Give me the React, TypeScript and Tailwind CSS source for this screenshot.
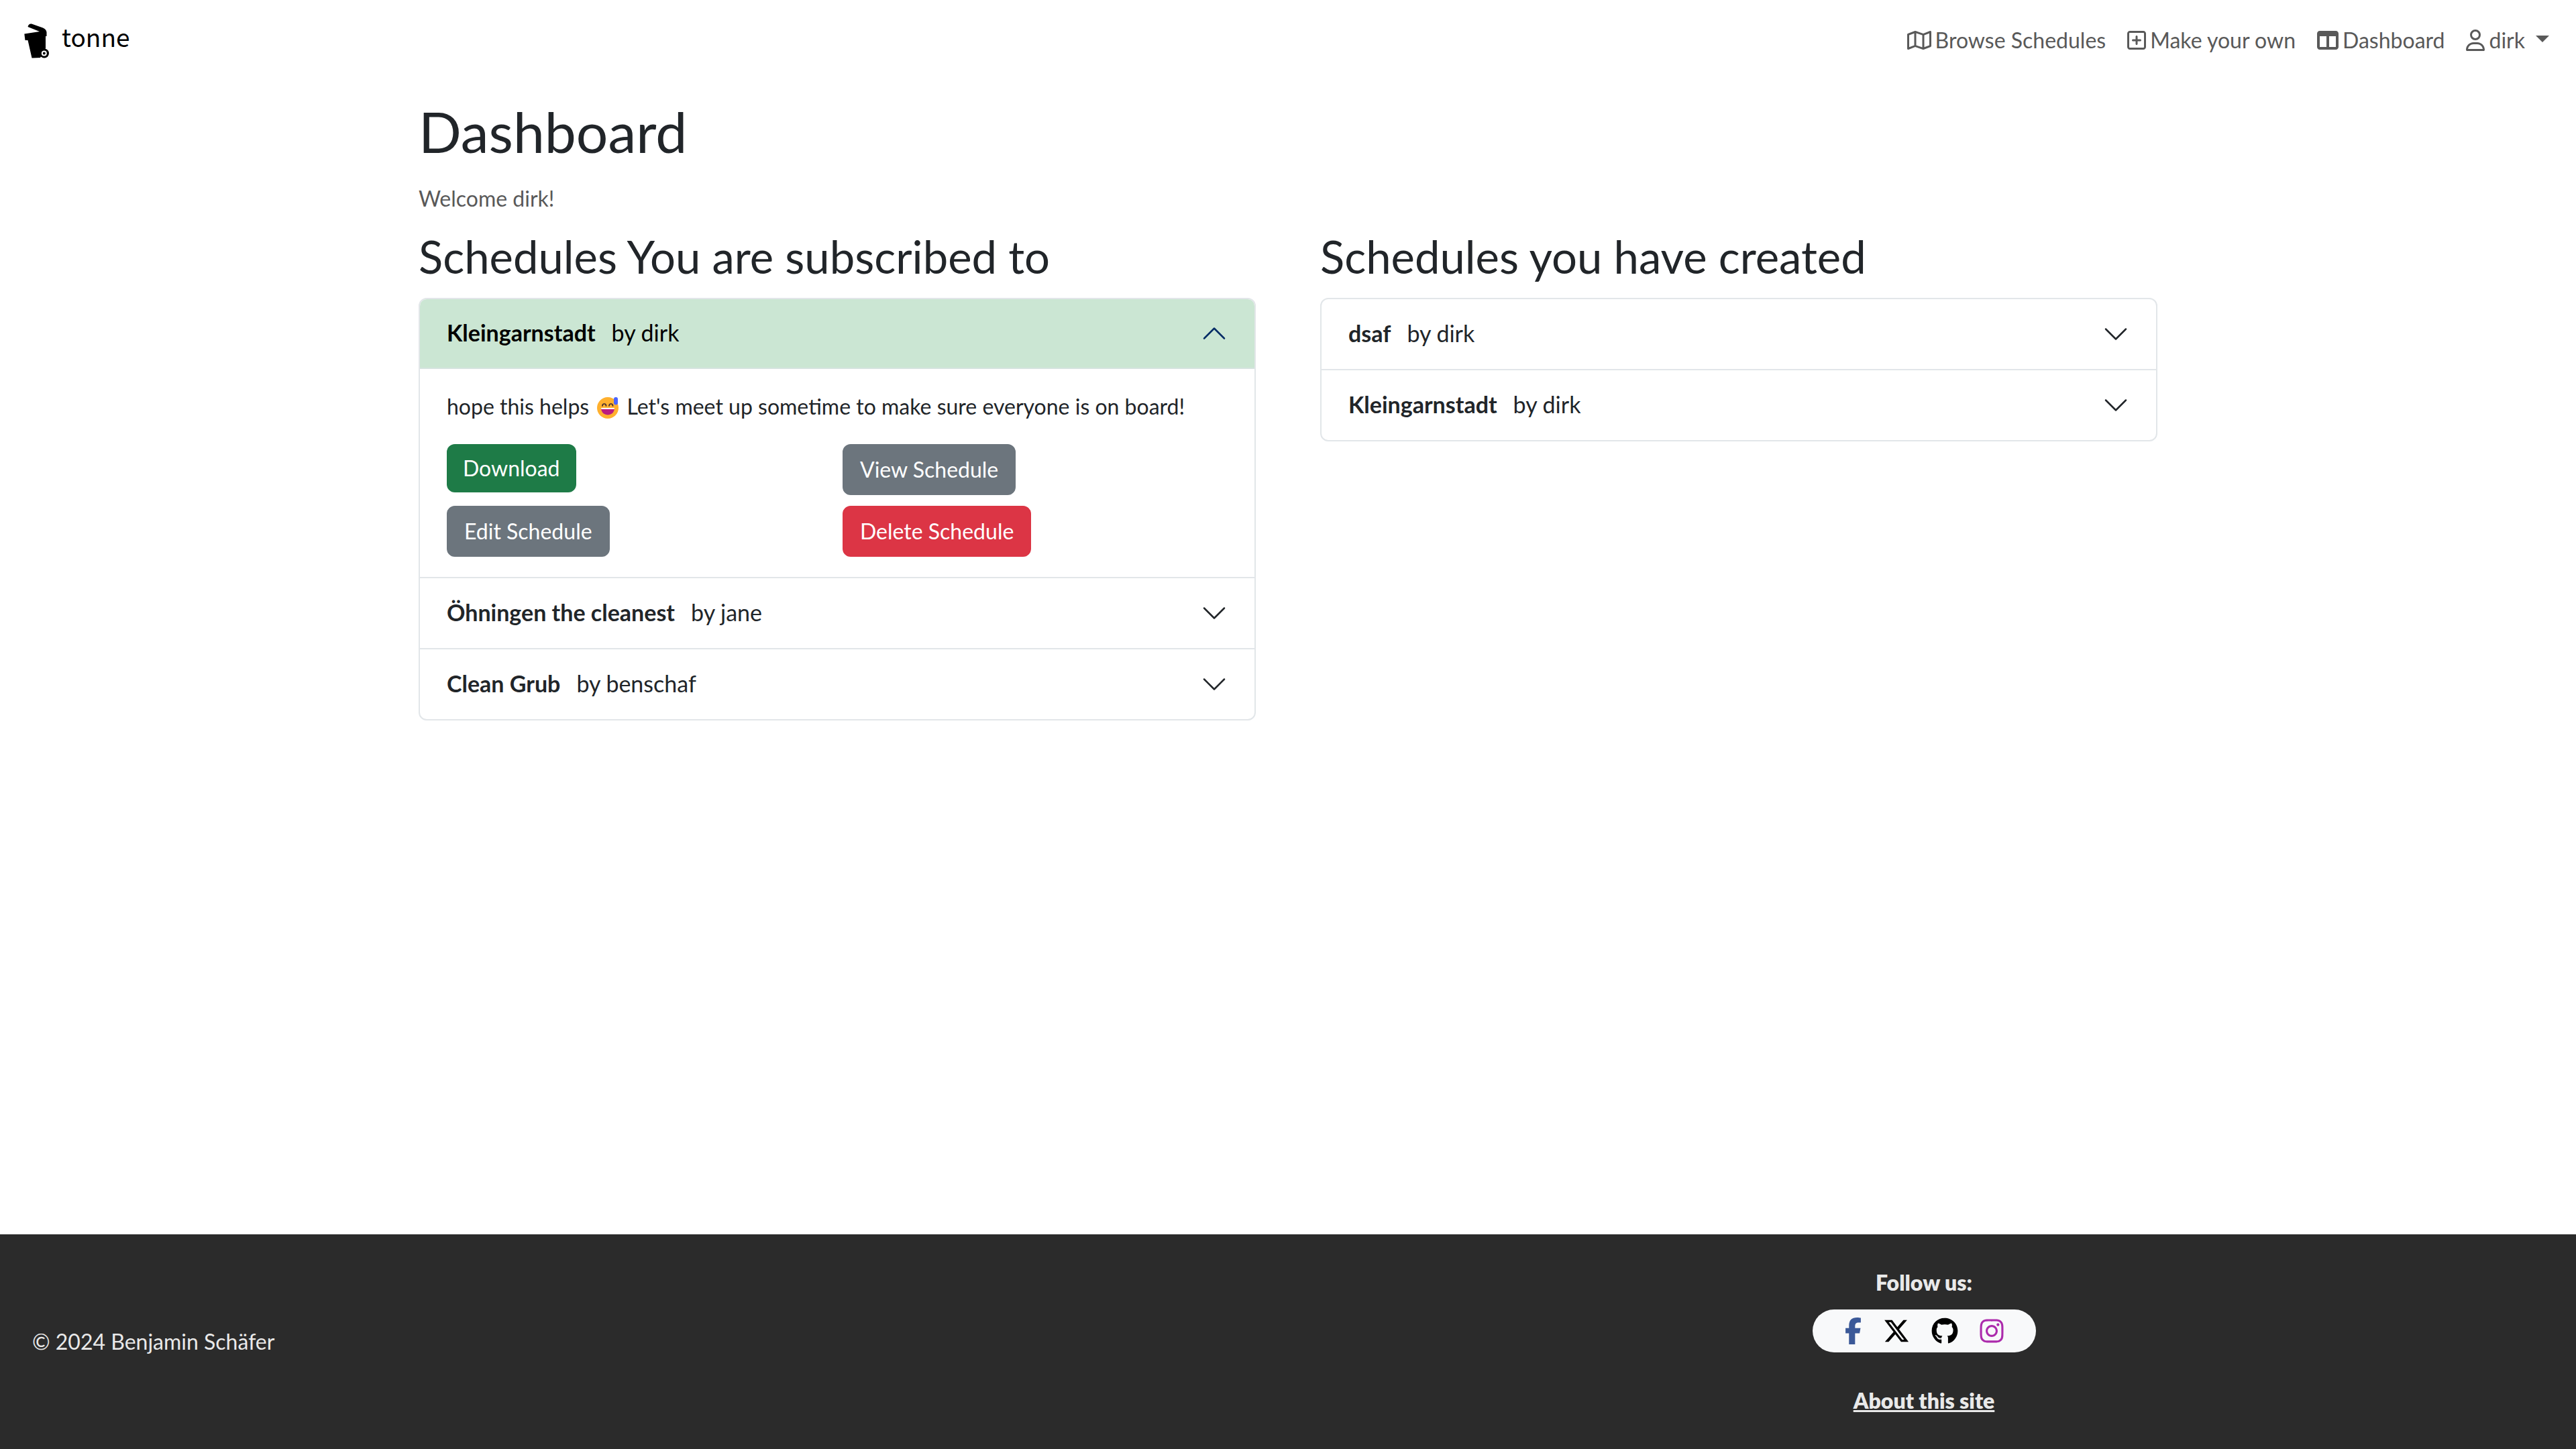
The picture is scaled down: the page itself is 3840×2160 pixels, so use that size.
import { useState, type ReactNode } from "react";
import {
  FaFacebookF,
  FaGithub,
  FaInstagram,
  FaRegMap,
  FaRegSquarePlus,
  FaRegUser,
  FaTableColumns,
  FaXTwitter,
} from "react-icons/fa6";

function BinLogo() {
  return (
    <svg viewBox="0 0 38 54" className="h-[54px] w-[38px]" aria-hidden="true">
      <path d="M5.500 7Q6.500 2 11 2.500L28 8.500Q33 10.500 33.500 15V21H32V39L24 53 11.500 53.500 5.500 27H1.500L.3 17.500 23 14Z" />
      <circle cx="30" cy="46.500" r="7" />
      <circle cx="29.800" cy="46.500" r="3" fill="none" stroke="#fff" strokeWidth="2" />
    </svg>
  );
}

function SweatSmile() {
  return (
    <svg viewBox="0 0 32 32" className="mx-1 inline-block size-8 align-[-6px]" role="img" aria-label="smiling face with sweat">
      <circle cx="16" cy="16" r="16" fill="#ffb02e" />
      <path d="M8 13c0-4 5.500-4 5.500 0M18 13c0-4 5.500-4 5.500 0" fill="none" stroke="#402a32" strokeWidth="1.700" strokeLinecap="round" />
      <path d="M6 16h20c0 14-20 14-20 0Z" fill="#bb1d80" />
      <path d="M6 16h20l-.4 2H6.400Z" fill="#fff" />
      <rect x="25" y="0" width="6" height="11.500" rx="3" fill="#4a64ff" />
    </svg>
  );
}

function Chevron({ open }: { open: boolean }) {
  return (
    <svg viewBox="0 0 16 16" className={open ? "size-10 rotate-180 text-[#052c65]" : "size-10 text-[#212529]"} fill="none" stroke="currentColor" strokeLinecap="round" strokeLinejoin="round" aria-hidden="true">
      <path d="m2 5 6 6 6-6" />
    </svg>
  );
}

function NavLink({ icon, children }: { icon: ReactNode; children: ReactNode }) {
  return (
    <a href="#" className="flex items-center gap-1.5 leading-[48px]">
      {icon}
      <span>{children}</span>
    </a>
  );
}

type Schedule = { name: string; by: string; body?: ReactNode };

function Accordion({ items, initial }: { items: Schedule[]; initial: number }) {
  const [open, setOpen] = useState(initial);
  return (
    <div className="divide-y-2 divide-[#e2e6e9] overflow-hidden rounded-xl border-2 border-[#e2e6e9]">
      {items.map((item, i) => (
        <div key={item.name}>
          <h3>
            <button
              type="button"
              aria-expanded={open === i}
              onClick={() => setOpen(open === i ? -1 : i)}
              className={
                open === i
                  ? "flex h-26 w-full items-center gap-6 border-b-2 border-[#d5e3df] bg-[#cbe6d3] px-10 text-left text-[34px] text-black"
                  : "flex h-26 w-full items-center gap-6 px-10 text-left text-[34px]"
              }
            >
              <strong className="pb-1 font-bold">{item.name}</strong>
              <span className="grow pb-1">by {item.by}</span>
              <Chevron open={open === i} />
            </button>
          </h3>
          {open === i && item.body}
        </div>
      ))}
    </div>
  );
}

function ScheduleDetails() {
  return (
    <div className="px-10 pt-8 pb-[30px]">
      <p className="mb-8 leading-[48px]">
        hope this helps <SweatSmile /> Let's meet up sometime to make sure everyone is on board!
      </p>
      <div className="grid grid-cols-2 items-start justify-items-start gap-4 text-white">
        <button type="button" className="rounded-xl bg-[#1e7b47] px-6 py-3 leading-[48px]">Download</button>
        <button type="button" className="rounded-xl border-2 border-[#6c757d] bg-[#6c757d] px-6 py-3 leading-[48px]">View Schedule</button>
        <button type="button" className="rounded-xl border-2 border-[#6c757d] bg-[#6c757d] px-6 py-3 leading-[48px]">Edit Schedule</button>
        <button type="button" className="rounded-xl border-2 border-[#dc3545] bg-[#dc3545] px-6 py-3 leading-[48px]">Delete Schedule</button>
      </div>
    </div>
  );
}

const subscribed: Schedule[] = [
  { name: "Kleingarnstadt", by: "dirk", body: <ScheduleDetails /> },
  { name: "Öhningen the cleanest", by: "jane" },
  { name: "Clean Grub", by: "benschaf" },
];

const created: Schedule[] = [
  { name: "dsaf", by: "dirk" },
  { name: "Kleingarnstadt", by: "dirk" },
];

export default function App() {
  return (
    <div className="flex min-h-screen flex-col bg-white font-['Lato',sans-serif] text-[32px] text-[#212529]">
      <header className="flex h-30 items-center justify-between pr-10 pl-9">
        <a href="#" className="flex items-center gap-[18px] font-['Noto_Sans_CJK_SC',sans-serif] text-[37px] leading-[60px] text-black">
          <BinLogo />
          <span className="pb-3">tonne</span>
        </a>
        <nav className="flex items-center gap-8 text-[#595959]">
          <NavLink icon={<FaRegMap className="h-8 w-9" />}>Browse Schedules</NavLink>
          <NavLink icon={<FaRegSquarePlus className="h-8 w-7" />}>Make your own</NavLink>
          <NavLink icon={<FaTableColumns className="size-8" />}>Dashboard</NavLink>
          <button type="button" className="flex items-center gap-1.5 leading-[48px]">
            <FaRegUser className="h-8 w-7" />
            dirk
            <span className="mb-1 ml-2.5 border-x-[10px] border-t-[10px] border-x-transparent border-t-[#595959]" />
          </button>
        </nav>
      </header>

      <main className="mx-auto w-full max-w-[2592px] grow">
        <h1 className="my-7 text-[84px] leading-[96px]">Dashboard</h1>
        <p className="mb-6 leading-[48px] text-[#595959]">Welcome dirk!</p>
        <div className="grid grid-cols-2 items-start gap-24">
          <section>
            <h2 className="mb-6 text-[67px] leading-[76px]">Schedules You are subscribed to</h2>
            <Accordion items={subscribed} initial={0} />
          </section>
          <section>
            <h2 className="mb-6 text-[67px] leading-[76px]">Schedules you have created</h2>
            <Accordion items={created} initial={-1} />
          </section>
        </div>
      </main>

      <footer className="grid h-80 grid-cols-2 items-center gap-12 bg-[#2b2b2b] px-12 text-[#e9e9e9]">
        <p>© 2024 Benjamin Schäfer</p>
        <div className="flex flex-col items-center text-center font-extrabold">
          <p className="leading-[48px]">Follow us:</p>
          <div className="mt-4 flex h-16 items-center gap-8 rounded-full bg-[#f8f9fa] px-12 text-[40px]">
            <a href="#" aria-label="Facebook" className="text-[#3b5998]"><FaFacebookF className="h-10 w-[25px]" /></a>
            <a href="#" aria-label="X" className="text-black"><FaXTwitter /></a>
            <a href="#" aria-label="GitHub" className="text-black"><FaGithub /></a>
            <a href="#" aria-label="Instagram" className="text-[#ac2bac]"><FaInstagram className="h-10 w-9" /></a>
          </div>
          <a href="#" className="mt-12 leading-[48px] underline">About this site</a>
        </div>
      </footer>
    </div>
  );
}
